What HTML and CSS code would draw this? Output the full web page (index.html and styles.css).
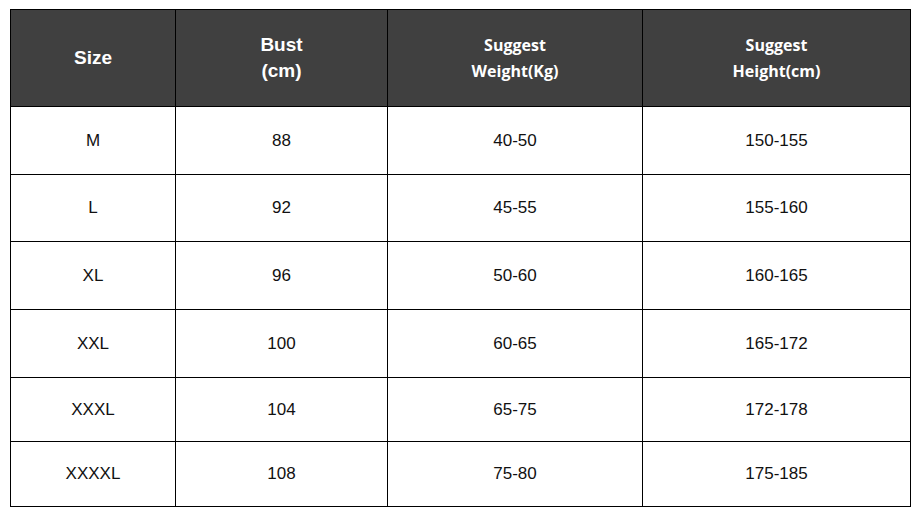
FILE: index.html
```html
<!DOCTYPE html>
<html>
<head>
<meta charset="utf-8">
<link rel="stylesheet" href="styles.css">
</head>
<body>
<table class="size-table">
  <colgroup>
    <col class="c1"><col class="c2"><col class="c3"><col class="c4">
  </colgroup>
  <thead>
    <tr class="head">
      <th class="arial">Size</th>
      <th class="arial">Bust<br>(cm)</th>
      <th class="cal">Suggest<br>Weight(Kg)</th>
      <th class="cal">Suggest<br>Height(cm)</th>
    </tr>
  </thead>
  <tbody>
    <tr class="r68"><td>M</td><td>88</td><td>40-50</td><td>150-155</td></tr>
    <tr class="r67"><td>L</td><td>92</td><td>45-55</td><td>155-160</td></tr>
    <tr class="r68"><td>XL</td><td>96</td><td>50-60</td><td>160-165</td></tr>
    <tr class="r68"><td>XXL</td><td>100</td><td>60-65</td><td>165-172</td></tr>
    <tr class="r64"><td>XXXL</td><td>104</td><td>65-75</td><td>172-178</td></tr>
    <tr class="r65"><td>XXXXL</td><td>108</td><td>75-80</td><td>175-185</td></tr>
  </tbody>
</table>
</body>
</html>
```
FILE: styles.css
```css
html, body {
  margin: 0;
  padding: 0;
  background: #fff;
}
body {
  padding: 9px 0 0 10px;
}
.size-table {
  border-collapse: collapse;
  table-layout: fixed;
  width: 901px;
  font-family: "Liberation Sans", Arial, sans-serif;
  color: #111;
}
.c1 { width: 165px; }
.c2 { width: 212px; }
.c3 { width: 255px; }
.c4 { width: 268px; }
.size-table th,
.size-table td {
  border: 1px solid #000;
  text-align: center;
  vertical-align: middle;
  padding: 0;
}
.head th {
  background: #404040;
  color: #fff;
  height: 96px;
}
.arial {
  font-family: "Liberation Sans", Arial, sans-serif;
  font-size: 19px;
  font-weight: bold;
  line-height: 26px;
}
.cal {
  font-family: "Open Sans", sans-serif;
  font-size: 16px;
  font-weight: bold;
  line-height: 26px;
}
.size-table td {
  font-size: 17px;
}
.r68 td { height: 67px; }
.r67 td { height: 66px; }
.r64 td { height: 63px; }
.r65 td { height: 64px; }
```
